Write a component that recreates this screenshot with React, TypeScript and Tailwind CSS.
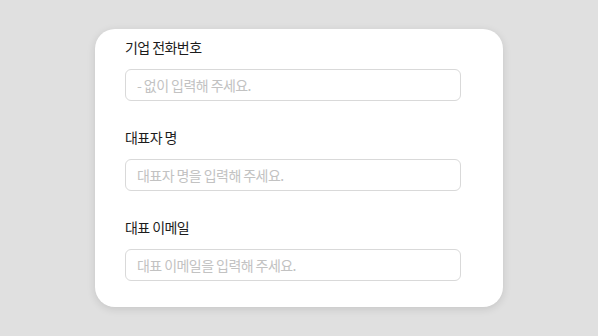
import React from "react";

const fields = [
  { label: "기업 전화번호", placeholder: "- 없이 입력해 주세요." },
  { label: "대표자 명", placeholder: "대표자 명을 입력해 주세요." },
  { label: "대표 이메일", placeholder: "대표 이메일을 입력해 주세요." },
];

export default function App() {
  return (
    <div
      className="w-[598px] h-[336px] flex items-center justify-center bg-[#e0e0e0]"
      style={{ fontFamily: '"Noto Sans CJK KR", "Noto Sans", sans-serif' }}
    >
      <div className="w-[408px] h-[278px] bg-white rounded-[20px] shadow-[0_2px_8px_rgba(0,0,0,0.12)] pl-[30px] pt-[8px] flex flex-col gap-[26px]">
        {fields.map((f) => (
          <div key={f.label} className="flex flex-col gap-[12px]">
            <label className="text-[14px] leading-[20px] tracking-[-0.04em] text-[#1c1c1c]">{f.label}</label>
            <input
              className="w-[336px] h-[32px] rounded-[6px] border border-[#d9d9d9] px-[11px] text-[14px] tracking-[-0.04em] text-[#222] placeholder:text-[#c2c2c2] outline-none"
              placeholder={f.placeholder}
            />
          </div>
        ))}
      </div>
    </div>
  );
}
